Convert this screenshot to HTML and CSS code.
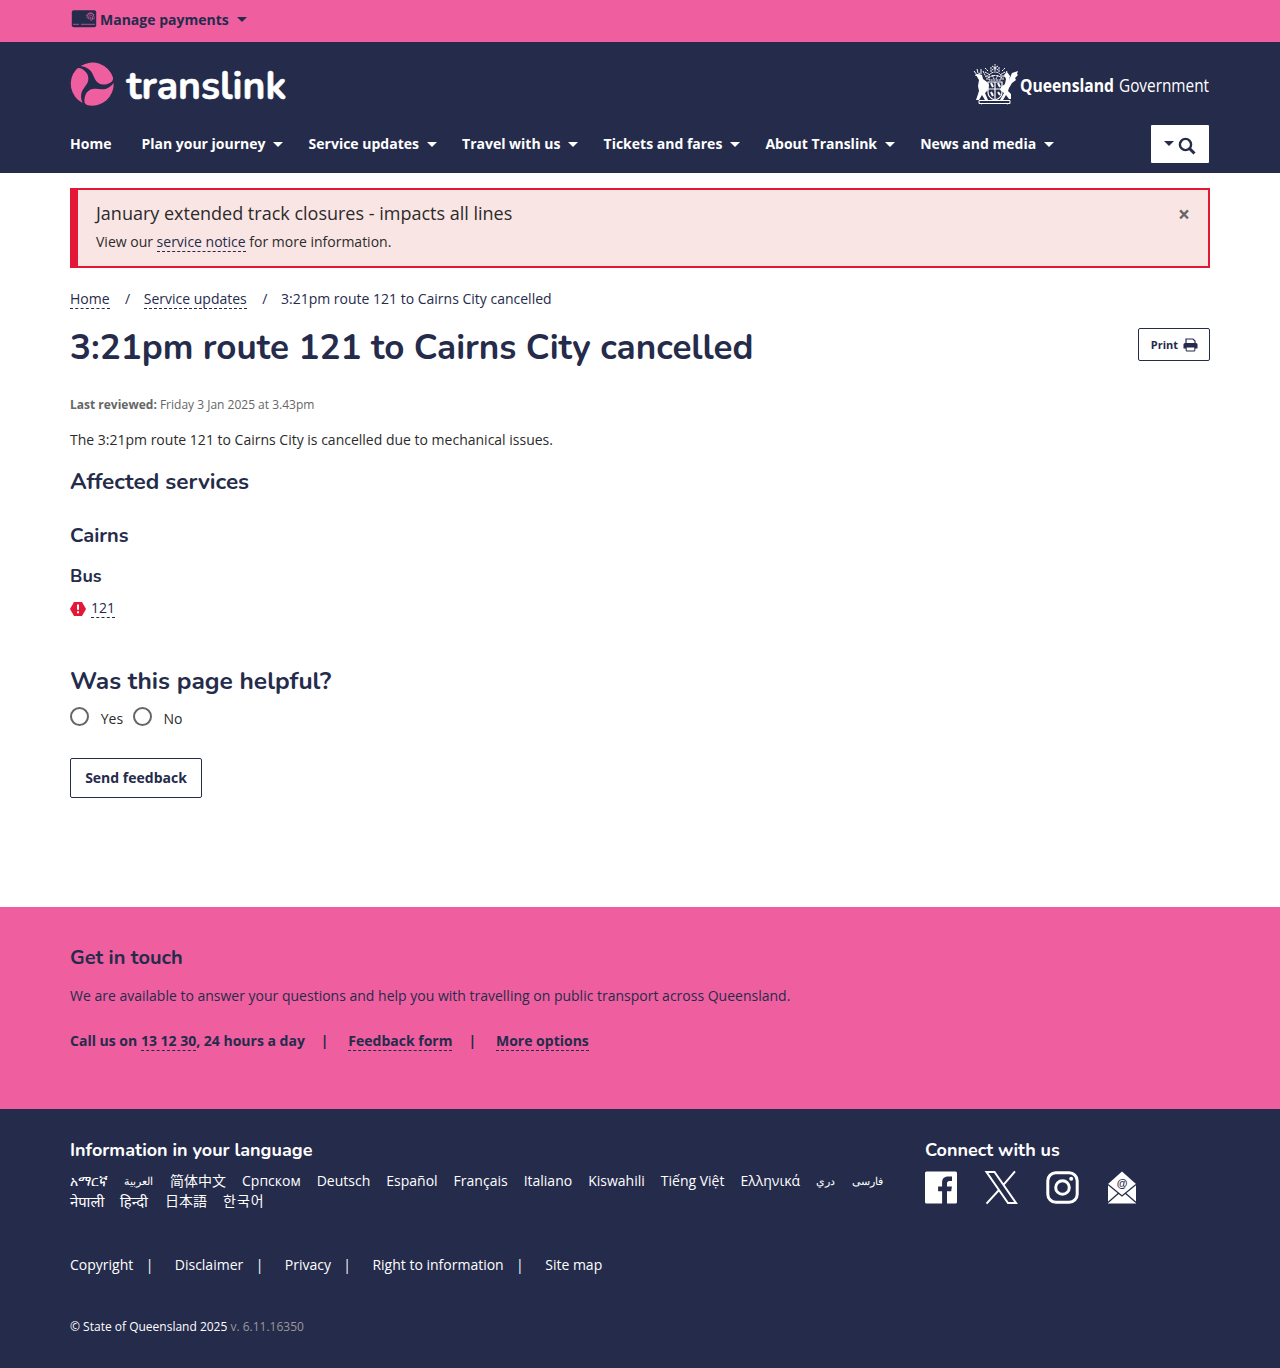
FILE: index.html
```html
<!DOCTYPE html>
<html lang="en">
<head>
<meta charset="utf-8">
<title>3:21pm route 121 to Cairns City cancelled | Translink</title>
<link rel="stylesheet" href="styles.css">
</head>
<body>
<div class="topbar"><div class="container">
  <a class="payments">
    <svg class="card" width="26" height="18" viewBox="0 0 26 18"><rect x=".8" y=".3" width="24.400" height="17" rx="2" fill="#252b4b"/><path d="M2 14.300h6M10 14.300h14" stroke="#b94d87" stroke-width="1"/><g fill="none" stroke="#ef5fa0" stroke-width=".7"><path d="M16 8.500c0-6 7-7 7-1v2M17.500 9c0-5 4-5 4-1.500v2.500M19 9.500c0-3 1-3 1-1v2.500M15.500 6c1-4 6-4 7.500-1"/></g></svg>
    <span>Manage payments</span><i class="caret"></i>
  </a>
</div></div>
<header class="header"><div class="container">
  <div class="brands">
    <svg class="logo" width="226" height="60" viewBox="0 0 226 60">
      <defs><path id="lobe" d="M-35-54A65 65 0 0 1 62-20Q66-6 45 0C29 5 14-2 8-15C0-31-3-49-35-54Z"/></defs>
      <g transform="translate(22.300 24) scale(.333)" fill="#ef5fa0"><use href="#lobe"/><use href="#lobe" transform="rotate(120)"/><use href="#lobe" transform="rotate(240)"/></g>
      <text class="wordmark" x="56.500" y="39" textLength="160" lengthAdjust="spacingAndGlyphs">translink</text>
    </svg>
    <svg class="qld" width="245" height="48" viewBox="0 0 245 48">
      <g fill="none" stroke="#fff" stroke-width="1">
        <path d="M5 37.500h31v3H5zM8 41l-3-1M33 41l3-1"/>
        <path d="M14 19h14v10q0 6-7 8q-7-2-7-8zM14 26h14M21 19v17" stroke-width="1.200"/>
        <path d="M14 15q7-5 14 0M15 12q6-6 12 0v5H15zM17 9V4M21 8V1M25 9V4M11 9l5 3M31 9l-5 3M11 5l3 3M31 5l-3 3M18 3l6 4M24 3l-6 4M13 12v5M29 12v5M18 12l2 4M24 12l-2 4M9 8l3 6M33 8l-3 6" stroke-dasharray="2.200 .5"/>
        <path d="M17 20l2 4M24 20l2 4M17 29l2 4M24 29l2 3" stroke-width="2"/>
        <path d="M0 8l3 4 3-2M1 12l3 1M7 6v5M3 6l1 4"/>
      </g>
      <g fill="#fff"><path d="M2 12l3-1 3 1 1 4 4 3 2 3-1 5-3 3 3 7h-3l-3-5-3 5H2l3-9-1-5 1-6z"/><path d="M27 24l4-3 1-5-2-4 3-3 3 4-1 4 3-7 6-2-1 3 1 1-3 3 1 2-4 3-3 5-1 3 3 3v5h-2l-3-4-3 5h-3l4-7-4-3z"/></g>
      <text class="qld-bold" x="46" y="29" textLength="94" lengthAdjust="spacingAndGlyphs">Queensland</text>
      <text class="qld-light" x="145" y="29" textLength="90" lengthAdjust="spacingAndGlyphs">Government</text>
    </svg>
  </div>
  <div class="navrow">
    <nav class="nav">
      <a class="home">Home</a><a>Plan your journey<i class="caret"></i></a><a>Service updates<i class="caret"></i></a><a>Travel with us<i class="caret"></i></a><a>Tickets and fares<i class="caret"></i></a><a>About Translink<i class="caret"></i></a><a>News and media<i class="caret"></i></a>
    </nav>
    <button class="search" aria-label="Search"><i class="caret"></i><svg width="18" height="18" viewBox="0 0 18 18" fill="none" stroke="#252b4b" stroke-width="2.400"><circle cx="7.500" cy="7.500" r="5.600"/><path d="M11.500 11.500l5 5" stroke-width="3"/></svg></button>
  </div>
</div></header>
<main class="container main">
  <section class="alert">
    <div><div class="alert-title">January extended track closures - impacts all lines</div>
    <div class="alert-text">View our <a class="link">service notice</a> for more information.</div></div>
    <span class="close">×</span>
  </section>
  <nav class="crumbs"><a class="link">Home</a><span class="slash">/</span><a class="link">Service updates</a><span class="slash">/</span><span>3:21pm route 121 to Cairns City cancelled</span></nav>
  <div class="titlebar"><h1>3:21pm route 121 to Cairns City cancelled</h1>
    <button class="print">Print <svg width="15" height="14" viewBox="0 0 15 14"><path d="M3 6V1h7l2 2v3" fill="none" stroke="#252b4b" stroke-width="1.200"/><path d="M.5 6.500q0-1.500 1.500-1.500h11q1.500 0 1.500 1.500V10.500H.5z" fill="#252b4b"/><path d="M3.200 9h8.600v4H3.200z" fill="#fff" stroke="#252b4b"/></svg></button>
  </div>
  <p class="reviewed"><b>Last reviewed:</b> Friday 3 Jan 2025 at 3.43pm</p>
  <p class="body">The 3:21pm route 121 to Cairns City is cancelled due to mechanical issues.</p>
  <h2 class="affected">Affected services</h2>
  <h3 class="region">Cairns</h3>
  <h4 class="mode">Bus</h4>
  <div class="service"><svg width="16" height="14" viewBox="0 0 16 14"><path d="M4 0h8l4 7-4 7H4L0 7z" fill="#e31837"/><path d="M7 2.500h2v5.300H7zM7 9.300h2v2H7z" fill="#fff"/></svg><a class="link">121</a></div>
  <h2 class="helpful">Was this page helpful?</h2>
  <div class="radios"><label><i class="radio"></i>Yes</label><label><i class="radio"></i>No</label></div>
  <button class="send">Send feedback</button>
</main>
<section class="touch"><div class="container">
  <h3>Get in touch</h3>
  <p>We are available to answer your questions and help you with travelling on public transport across Queensland.</p>
  <div class="contacts"><span>Call us on <a class="link">13 12 30</a>, 24 hours a day</span><span class="bar">|</span><a class="link">Feedback form</a><span class="bar">|</span><a class="link">More options</a></div>
</div></section>
<footer class="footer"><div class="container">
  <div class="footcols">
    <div class="languages"><h4>Information in your language</h4>
      <div class="langs"><a class="am" lang="am">አማርኛ</a><a class="ar" lang="ar">العربية</a><a class="zh" lang="zh">简体中文</a><a>Српском</a><a>Deutsch</a><a>Español</a><a>Français</a><a>Italiano</a><a>Kiswahili</a><a>Tiếng Việt</a><a>Ελληνικά</a><a class="dari" lang="prs">دري</a><a class="fa" lang="fa">فارسی</a></div>
      <div class="langs"><a class="ne" lang="ne">नेपाली</a><a class="hi" lang="hi">हिन्दी</a><a class="ja" lang="ja">日本語</a><a class="ko" lang="ko">한국어</a></div>
    </div>
    <div class="connect"><h4>Connect with us</h4>
      <div class="social">
        <svg width="32" height="33" viewBox="0 0 32 33"><path fill="#fff" d="M1.500.5h29Q32 .5 32 2v29q0 1.500-1.500 1.500H22V20.300h4.200l.7-4.800H22V12.500c0-1.800.7-2.600 2.600-2.600H27V5.500h-3.700c-4.200 0-6.200 2.300-6.200 6v4h-4v4.800h4V32.500H1.500Q0 32.500 0 31V2Q0 .5 1.500.5z"/></svg>
        <svg width="33" height="33" viewBox="0 0 33 33"><path fill="none" stroke="#fff" stroke-width="2" d="M1.500 1h8L31 32h-8zM30 .3 18 14.400M14 19 1.500 32.700"/></svg>
        <svg width="33" height="33" viewBox="0 0 33 33" fill="none" stroke="#fff" stroke-width="3"><rect x="1.800" y="1.800" width="29.400" height="29.400" rx="8"/><circle cx="16.500" cy="16.500" r="6.800"/><circle cx="25.200" cy="7.800" r="2" fill="#fff" stroke="none"/></svg>
        <svg width="30" height="33" viewBox="0 0 30 33"><path d="M1 13 15 .5 29 13v19.500H1z" fill="#fff"/><path d="M1 13.500 15 25 29 13.500M1 31.500l10.500-9.200M29 31.500l-10.500-9.200" fill="none" stroke="#252b4b" stroke-width="1.300"/><text class="at" x="15" y="16" text-anchor="middle">@</text></svg>
      </div>
    </div>
  </div>
  <div class="legal"><a>Copyright</a><i>|</i><a>Disclaimer</a><i>|</i><a>Privacy</a><i>|</i><a>Right to information</a><i>|</i><a>Site map</a></div>
  <div class="copy">© State of Queensland 2025 <span>v. 6.11.16350</span></div>
</div></footer>
</body>
</html>
```
FILE: styles.css
```css
* { box-sizing: border-box; }
body { margin: 0; background: #fff; color: #2b2b2b; font: 14px/20px "Open Sans", "Noto Sans", sans-serif; font-weight: 400; }
h1, h2, h3, h4, p { margin: 0; }
h1, h2, h3, h4 { color: #252b4b; font-family: Nunito, Lato, sans-serif; font-weight: 700; white-space: nowrap; }
button { font-family: inherit; cursor: pointer; }
svg { overflow: visible; }
.container { width: 1140px; margin: 0 auto; }
.link { border-bottom: 1px dashed #252b4b; color: #252b4b; }
.caret { display: inline-block; border: 5px solid transparent; border-top: 5.500px solid currentColor; border-bottom: 0; }

.topbar { height: 42px; background: #ef5fa0; }
.payments { display: flex; align-items: center; padding-top: 9px; height: 31px; color: #252b4b; font-weight: 700; }
.card { margin: -3px 3px 0 1px; }
.payments .caret { margin: -1px 0 0 8px; }

.header { height: 131px; background: #252b4b; color: #fff; }
.brands { display: flex; justify-content: space-between; height: 83px; padding-top: 18px; }
.wordmark { font: 700 40px Nunito, Lato, sans-serif; fill: #fff; stroke: #fff; stroke-width: .6; }
.qld { margin: 3px -9px 0 0; }
.qld-bold { font: 700 18px "Open Sans", sans-serif; fill: #fff; }
.qld-light { font: 400 18px "Open Sans", sans-serif; fill: #fff; }
.navrow { display: flex; justify-content: space-between; padding-right: 1px; }
.nav { display: flex; padding-top: 9px; gap: 25.200px; font-weight: 700; white-space: nowrap; }
.nav .home { margin-right: 4.800px; }
.nav .caret { margin-left: 7.900px; vertical-align: 2px; }
.search { width: 58px; height: 38px; padding: 2px 0 0; display: flex; align-items: center; justify-content: center; gap: 4px; border: 0; background: #fff; color: #252b4b; border-radius: 1px; }
.search .caret { margin-top: -3px; }
.search svg { margin-top: 1px; }

.main { height: 734px; padding-top: 15px; }
.alert { height: 80px; display: flex; justify-content: space-between; padding: 11px 18px 0 18px; background: #f9e5e3; border: 2px solid #e31837; border-left-width: 8px; }
.alert-title { font-size: 18px; line-height: 24px; }
.alert-text { margin-top: 7px; }
.close { font-weight: 700; font-size: 21px; line-height: 27px; color: #666; }
.crumbs { display: flex; margin-top: 21px; height: 20px; color: #252b4b; }
.crumbs .link { height: 20px; }
.slash { width: 34.200px; padding-left: 2px; text-align: center; }
.titlebar { display: flex; justify-content: space-between; margin-top: 19px; height: 50px; }
h1 { font-size: 35px; line-height: 40px; }
.print { width: 72px; height: 33px; display: flex; align-items: center; justify-content: center; gap: 5px; padding: 0 0 0 1px; background: #fff; border: 1px solid #252b4b; border-radius: 2px; color: #252b4b; font-weight: 700; font-size: 11px; }
.reviewed { margin-top: 17px; font-size: 12px; color: #666; }
.body { margin-top: 15px; }
.affected { margin-top: 17px; font-size: 22.500px; line-height: 30px; }
.region { margin-top: 27px; font-size: 20px; line-height: 24px; }
.mode { margin-top: 17px; font-size: 18px; line-height: 22px; }
.service { display: flex; align-items: center; gap: 5px; margin-top: 12px; height: 20px; }
.service .link { height: 20px; margin-top: -2px; }
.helpful { margin-top: 47px; font-size: 24.500px; line-height: 30px; }
.radios { display: flex; gap: 9.600px; margin-top: 12px; height: 22px; }
.radios label { display: flex; gap: 11.800px; line-height: 22px; }
.radio { width: 19px; height: 19px; border: 2px solid #666; border-radius: 50%; margin-top: -1px; }
.send { display: block; width: 132px; height: 40px; margin-top: 28px; padding: 0 0 2px; border: 1px solid #252b4b; border-radius: 2px; background: #fff; color: #252b4b; font-weight: 700; font-size: 14px; }

.touch { height: 202px; padding-top: 39px; background: #ef5fa0; color: #252b4b; }
.touch h3 { font-size: 20px; line-height: 24px; }
.touch p { margin-top: 16px; }
.contacts { display: flex; margin-top: 25px; font-weight: 700; white-space: nowrap; }
.bar { width: 43.500px; padding-right: 4px; text-align: center; }
.contacts .link { height: 20px; }

.footer { height: 259px; padding-top: 29px; background: #252b4b; color: #fff; }
.footcols { display: flex; }
.footer h4 { color: #fff; font-size: 18px; line-height: 24px; }
.languages { width: 855px; padding-bottom: 40px; }
.langs { display: flex; gap: 16px; height: 20px; white-space: nowrap; }
.langs:nth-child(2) { margin-top: 9px; }
.am { width: 38px; }
.ar { width: 30px; }
.zh { width: 56px; }
.dari { width: 20px; }
.fa { width: 31px; }
.ar, .dari, .fa { font-size: 11px; }
.ne { width: 34px; }
.hi { width: 29px; }
.ne, .hi { font-size: 14.800px; }
.ja { width: 42px; }
.ko { width: 42px; }
.zh { font-family: "Noto Sans CJK SC", sans-serif; }
.ja { font-family: "Noto Sans CJK JP", sans-serif; }
.ko { font-family: "Noto Sans CJK KR", sans-serif; letter-spacing: 1px; }
.zh, .ja, .ko { line-height: 18px; }
.social { display: flex; gap: 28px; margin-top: 9px; }
.at { font: 600 11px "Liberation Sans", sans-serif; fill: #252b4b; }
.legal { display: flex; margin-top: 4px; }
.legal i { width: 41.500px; padding-right: 9px; text-align: center; font-style: normal; }
.copy { margin-top: 42px; font-size: 12px; }
.copy span { color: #999; }
```
